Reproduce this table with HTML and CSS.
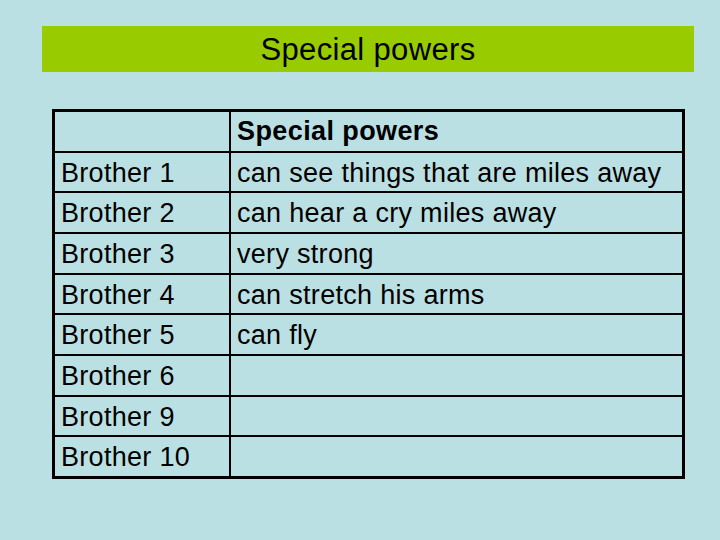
FILE: index.html
```html
<!DOCTYPE html>
<html>
<head>
<meta charset="utf-8">
<link rel="stylesheet" href="styles.css">
</head>
<body>
<div class="slide">
  <div class="title">Special powers</div>
  <table class="powers">
    <tr><td class="name"></td><td class="power head">Special powers</td></tr>
    <tr><td class="name">Brother 1</td><td class="power">can see things that are miles away</td></tr>
    <tr><td class="name">Brother 2</td><td class="power">can hear a cry miles away</td></tr>
    <tr><td class="name">Brother 3</td><td class="power">very strong</td></tr>
    <tr><td class="name">Brother 4</td><td class="power">can stretch his arms</td></tr>
    <tr><td class="name">Brother 5</td><td class="power">can fly</td></tr>
    <tr><td class="name">Brother 6</td><td class="power"></td></tr>
    <tr><td class="name">Brother 9</td><td class="power"></td></tr>
    <tr class="last"><td class="name">Brother 10</td><td class="power"></td></tr>
  </table>
</div>
</body>
</html>
```
FILE: styles.css
```css
html, body {
  margin: 0;
  padding: 0;
  background: #bbe0e3;
}
.slide {
  width: 720px;
  height: 540px;
  padding-top: 26px;
  box-sizing: border-box;
  font-family: "Liberation Sans", Arial, sans-serif;
  color: #000;
}
.title {
  margin-left: 42px;
  width: 652px;
  height: 46px;
  line-height: 47px;
  background: #99cc00;
  text-align: center;
  font-size: 31px;
  letter-spacing: 0.35px;
}
.powers {
  margin: 37px 0 0 52px;
  width: 633px;
  border: 3px solid #000;
  border-spacing: 0;
  border-collapse: separate;
}
.powers td {
  box-sizing: border-box;
  height: 40.67px;
  line-height: 36.67px;
  padding: 2px 0 0 6px;
  font-size: 27px;
  letter-spacing: 0.3px;
  white-space: nowrap;
  border-bottom: 2px solid #000;
  vertical-align: top;
}
.powers tr.last td {
  height: 38.67px;
  border-bottom: none;
}
.powers td.name {
  width: 176px;
  border-right: 2px solid #000;
}
.powers td.head {
  font-weight: bold;
  line-height: 35px;
  letter-spacing: 0.4px;
}
```
